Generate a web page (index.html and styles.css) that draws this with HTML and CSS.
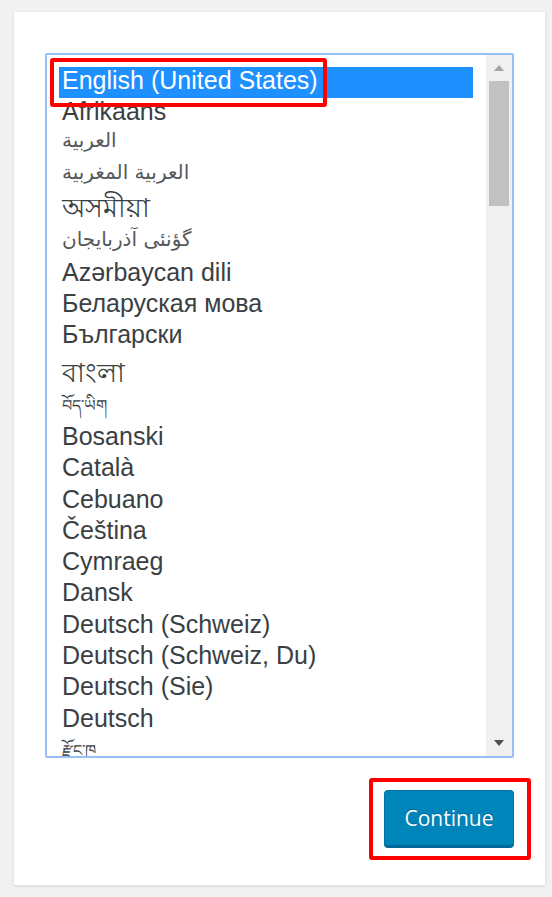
FILE: index.html
```html
<!DOCTYPE html>
<html lang="en">
<head>
<meta charset="utf-8">
<title>Select a default language</title>
<link rel="stylesheet" href="styles.css">
</head>
<body>
<div class="card">
  <div class="listbox">
    <div class="list">
      <div class="opt sel">English (United States)</div>
      <div class="opt">Afrikaans</div>
      <div class="opt ar" dir="auto">العربية</div>
      <div class="opt ar" dir="auto">العربية المغربية</div>
      <div class="opt bn">অসমীয়া</div>
      <div class="opt ar ar-low" dir="auto">گؤنئی آذربایجان</div>
      <div class="opt">Azərbaycan dili</div>
      <div class="opt">Беларуская мова</div>
      <div class="opt">Български</div>
      <div class="opt bn bn-tall">বাংলা</div>
      <div class="opt bo">བོད་ཡིག</div>
      <div class="opt">Bosanski</div>
      <div class="opt">Català</div>
      <div class="opt">Cebuano</div>
      <div class="opt">Čeština</div>
      <div class="opt">Cymraeg</div>
      <div class="opt">Dansk</div>
      <div class="opt">Deutsch (Schweiz)</div>
      <div class="opt">Deutsch (Schweiz, Du)</div>
      <div class="opt">Deutsch (Sie)</div>
      <div class="opt">Deutsch</div>
      <div class="opt bo">རྫོང་ཁ</div>
    </div>
    <div class="scrollbar">
      <div class="sb-btn">
        <svg width="10" height="6" viewBox="0 0 10 6"><polygon points="5,0 10,6 0,6" fill="#a3a3a3"/></svg>
      </div>
      <div class="sb-track"><div class="thumb"></div></div>
      <div class="sb-btn">
        <svg width="10" height="6" viewBox="0 0 10 6"><polygon points="0,0 10,0 5,6" fill="#505050"/></svg>
      </div>
    </div>
  </div>
  <div class="actions">
    <button class="btn" type="button">Continue</button>
  </div>
</div>
<div class="mark mark-lang"></div>
<div class="mark mark-btn"></div>
</body>
</html>
```

FILE: styles.css
```css
html, body {
  margin: 0;
  padding: 0;
}
body {
  background: #f1f1f1;
  padding: 12px 7px 12px 14px;
  font-family: "Liberation Sans", Arial, sans-serif;
  color: #32373c;
  position: relative;
}
.card {
  background: #fff;
  box-shadow: 0 1px 3px rgba(0, 0, 0, 0.13);
  height: 873px;
  box-sizing: border-box;
  padding: 41px 31px 0 31px;
}
.listbox {
  display: flex;
  height: 705px;
  box-sizing: border-box;
  border: 2px solid #97bff3;
  border-radius: 2px;
  overflow: hidden;
}
.list {
  flex: 1;
  overflow: hidden;
  padding: 12px 13px 0 12px;
}
.opt {
  height: 31.3px;
  line-height: 27px;
  font-size: 25px;
  padding-left: 3px;
  white-space: nowrap;
  color: #3a3f44;
}
.opt.sel {
  background: #1e90ff;
  color: #fff;
}
.opt.ar {
  height: 32.3px;
  font-family: "DejaVu Sans", sans-serif;
  font-size: 20px;
  line-height: 20px;
  text-align: left;
  color: #55595d;
}
.opt.ar-low {
  line-height: 26px;
}
.opt.bn {
  height: 32.3px;
  font-size: 27px;
  line-height: 28px;
}
.opt.bn-tall {
  height: 38px;
  line-height: 40px;
}
.opt.bo {
  height: 32.3px;
  font-size: 16px;
  line-height: 30px;
}
.scrollbar {
  width: 26px;
  background: #f0f0f0;
  display: flex;
  flex-direction: column;
}
.sb-btn {
  height: 26px;
  display: flex;
  align-items: center;
  justify-content: center;
}
.sb-track {
  flex: 1;
  padding: 0 3px;
}
.thumb {
  height: 125px;
  background: #c1c1c1;
}
.actions {
  display: flex;
  justify-content: flex-end;
  padding-top: 32px;
}
.btn {
  width: 130px;
  height: 58px;
  background: #0085ba;
  border: 1px solid #0073aa;
  border-bottom-color: #006799;
  box-shadow: inset 0 -2px 0 #006799;
  border-radius: 4px;
  color: #fff;
  font-family: "Open Sans", sans-serif;
  font-size: 21px;
  padding: 0 0 2px;
  text-shadow: 0 -1px 1px #006799;
}
.mark {
  position: absolute;
  border: 4px solid #ff0000;
  border-radius: 3px;
  box-sizing: border-box;
}
.mark-lang {
  left: 50px;
  top: 58px;
  width: 277px;
  height: 49px;
}
.mark-btn {
  left: 369px;
  top: 778px;
  width: 162px;
  height: 82px;
}
```
